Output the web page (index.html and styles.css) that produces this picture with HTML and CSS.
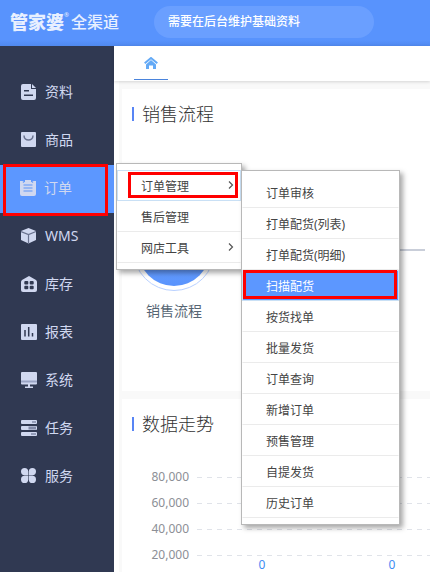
FILE: index.html
```html
<!DOCTYPE html>
<html lang="zh-CN">
<head>
<meta charset="utf-8">
<meta name="viewport" content="width=device-width, initial-scale=1">
<title>管家婆全渠道</title>
<link rel="stylesheet" href="styles.css">
</head>
<body>
<header class="topbar">
  <a class="logo" href="#"><b class="logo-main">管家婆</b><sup class="logo-mark">®</sup><span class="logo-sub">全渠道</span></a>
  <p class="notice">需要在后台维护基础资料</p>
</header>
<div class="shell">
  <nav class="sidebar">
    <a class="nav-item" href="#"><svg class="icon" viewBox="0 0 16 16"><path fill="currentColor" d="M2 0h8v5h5v9q0 2-2 2H2q-2 0-2-2V2q0-2 2-2zM11 0l4 4h-4z"/><path stroke="#303952" stroke-width="1.5" d="M3 6.700h5M3 11.200h9"/></svg>资料</a>
    <a class="nav-item" href="#"><svg class="icon" viewBox="0 0 16 16"><rect width="15" height="15" rx="1" fill="currentColor"/><path fill="none" stroke="#69728f" stroke-width="1.500" d="M3 3.500c0 6 9 6 9 0"/></svg>商品</a>
    <div class="nav-group">
      <a class="nav-item active" href="#"><svg class="icon" viewBox="0 0 16 16"><path fill="currentColor" d="M0 1h3v1h2V0h6v2h2V1h3v13q0 2-2 2H2q-2 0-2-2z"/><path stroke="#83abf3" stroke-width="1.300" d="M3.500 5h9M3.500 8h9M3.500 11h9M3.500 1v2M12.500 1v2"/></svg>订单</a>
      <span class="mark mark-nav"></span>
      <div class="menu menu-main">
        <a class="menu-item hover" href="#">订单管理<svg class="arrow" viewBox="0 0 6 8"><path d="M1 .500l3.500 3.500L1 7.500"/></svg></a>
        <a class="menu-item" href="#">售后管理</a>
        <a class="menu-item" href="#">网店工具<svg class="arrow" viewBox="0 0 6 8"><path d="M1 .500l3.500 3.500L1 7.500"/></svg></a>
        <span class="mark mark-parent"></span>
        <div class="menu menu-sub">
          <a class="menu-item" href="#">订单审核</a>
          <a class="menu-item" href="#">打单配货(列表)</a>
          <a class="menu-item" href="#">打单配货(明细)</a>
          <a class="menu-item selected" href="#">扫描配货<span class="mark mark-child"></span></a>
          <a class="menu-item" href="#">按货找单</a>
          <a class="menu-item" href="#">批量发货</a>
          <a class="menu-item" href="#">订单查询</a>
          <a class="menu-item" href="#">新增订单</a>
          <a class="menu-item" href="#">预售管理</a>
          <a class="menu-item" href="#">自提发货</a>
          <a class="menu-item" href="#">历史订单</a>
        </div>
      </div>
    </div>
    <a class="nav-item" href="#"><svg class="icon" viewBox="0 0 16 16"><path fill="currentColor" d="M7.500 0L15 3v9l-7.500 3.500L0 12V3z"/><path fill="none" stroke="#69728f" stroke-width="1.200" d="M0 3.500l7.500 3 7.500-3M7.500 6.500v9"/></svg>WMS</a>
    <a class="nav-item" href="#"><svg class="icon" viewBox="0 0 16 16"><path fill="currentColor" d="M8 0l7 4q1 1 1 2v8q0 2-2 2H2q-2 0-2-2V6q0-1 1-2z"/><g fill="#303952"><rect x="3.300" y="5" width="4" height="3.600" rx="1"/><rect x="8.700" y="5" width="4" height="3.600" rx="1"/><rect x="3.300" y="9.700" width="4" height="3.600" rx="1"/><rect x="8.700" y="9.700" width="4" height="3.600" rx="1"/></g></svg>库存</a>
    <a class="nav-item" href="#"><svg class="icon" viewBox="0 0 16 16"><rect width="16" height="16" rx="1" fill="currentColor"/><path stroke="#303952" stroke-width="1.500" d="M4 6v6.500M7.700 3v9.500M11.500 9v3.500"/></svg>报表</a>
    <a class="nav-item" href="#"><svg class="icon" viewBox="0 0 16 16"><rect width="16" height="12.500" rx="1" fill="currentColor"/><path fill="#9aa4c4" d="M0 8.500h16v2H0z"/><path fill="currentColor" d="M7 12h2v2.500h3V16H4v-1.500h3z"/></svg>系统</a>
    <a class="nav-item" href="#"><svg class="icon" viewBox="0 0 16 16"><g fill="currentColor"><rect width="16" height="4" rx="1"/><rect y="6" width="16" height="4" rx="1"/><rect y="12" width="16" height="4" rx="1"/></g><path fill="#818aa8" d="M11 1.200h4v1.600h-4zM7.500 6.500H15v3H7.500zM10 13.200h5v1.600h-5z"/></svg>任务</a>
    <a class="nav-item" href="#"><svg class="icon" viewBox="0 0 16 16"><g fill="currentColor"><path d="M3.600 0a3.600 3.600 0 0 1 3.600 3.600v3.600H3.600a3.600 3.600 0 0 1 0-7.200zM11.400 0a3.600 3.600 0 0 1 0 7.200H7.800V3.600A3.600 3.600 0 0 1 11.400 0zM3.600 7.800h3.600v3.600a3.600 3.600 0 1 1-3.600-3.600zM7.800 7.800h3.600a3.600 3.600 0 1 1-3.600 3.600z"/></g></svg>服务</a>
  </nav>
  <main class="content">
    <div class="tabs">
      <a class="tab" href="#" aria-label="首页"><svg class="home" viewBox="0 0 14 12"><path fill="none" stroke="#64aaf6" stroke-width="2" d="M.700 6.300L7 1l6.300 5.300"/><path fill="#64aaf6" d="M7 3l5 4.400V12H9V8.500H5V12H2V7.400z"/></svg></a>
    </div>
    <div class="board">
      <section class="card">
        <h2 class="title">销售流程</h2>
        <div class="flow">
          <div class="step"><span class="disc"></span><span class="step-name">销售流程</span></div>
          <span class="link"></span>
        </div>
      </section>
      <section class="card card-chart">
        <h2 class="title">数据走势</h2>
        <div class="chart">
          <div class="row"><span class="tick">80,000</span><span class="grid"></span></div>
          <div class="row"><span class="tick">60,000</span><span class="grid"></span></div>
          <div class="row"><span class="tick">40,000</span><span class="grid"></span></div>
          <div class="row"><span class="tick">20,000</span><span class="grid"></span></div>
          <div class="values"><span>0</span><span>0</span></div>
        </div>
      </section>
    </div>
  </main>
</div>
</body>
</html>
```
FILE: styles.css
```css
* { box-sizing: border-box; }

body {
  margin: 0;
  height: 100vh;
  display: flex;
  flex-direction: column;
  overflow: hidden;
  background: #fff;
  color: #333;
  font: 12px/20px "Noto Sans", "Noto Sans CJK SC", sans-serif;
}

a { color: inherit; text-decoration: none; }

/* top bar */
.topbar {
  flex: none;
  height: 46px;
  display: flex;
  align-items: flex-start;
  padding: 6px 0 0 10px;
  color: #fff;
  background: linear-gradient(#5893fd 0 40px, #5089ef);
}
.logo { display: flex; align-items: center; width: 144px; height: 32px; white-space: nowrap; color: #e8f0ff; }
.logo-main { font-size: 18px; font-weight: 900; }
.logo-mark { width: 7px; font-size: 6px; line-height: 6px; align-self: flex-start; padding-top: 6px; }
.logo-sub { font-size: 16px; font-weight: 500; }
.notice {
  width: 220px;
  margin: 0;
  padding: 0 14px;
  line-height: 32px;
  font-weight: 500;
  border-radius: 16px;
  background: #6a9fff;
}

.shell { flex: 1; min-height: 0; display: flex; }

/* side navigation */
.sidebar {
  flex: none;
  width: 114px;
  padding-top: 23px;
  color: #d0d8f0;
  background: #303952;
}
.nav-item {
  display: flex;
  align-items: center;
  gap: 8px;
  height: 48px;
  padding: 0 0 2px 21px;
  font-size: 14px;
}
.nav-item.active { padding-left: 20px; background: #5c97ff; }
.icon { width: 16px; height: 16px; }
.nav-group { position: relative; }

/* pop-up menus */
.menu {
  position: absolute;
  z-index: 2;
  padding: 6px 0;
  border: 1px solid #b8b8b8;
  background: #fff;
  color: #444;
  box-shadow: 3px 3px 5px rgba(0, 0, 0, .35);
}
.menu-main { left: 116px; top: -2px; width: 126px; }
.menu-sub { left: 124px; top: 6px; width: 159px; }
.menu-item {
  position: relative;
  display: flex;
  align-items: center;
  justify-content: space-between;
  height: 31px;
  padding: 2px 6px 0 23px;
  border: 1px solid transparent;
  border-bottom-color: #ebebeb;
}
.menu-item.hover { border-color: #c9e0f5; }
.menu-item.selected { color: #fff; background: #5c97ff; border-color: #c9e0f5; }
.arrow { width: 6px; height: 8px; margin-bottom: 4px; fill: none; stroke: #555; stroke-width: 1.200; }

/* highlight frames */
.mark { position: absolute; z-index: 3; border: 3px solid #f00; }
.mark-nav { left: 3px; top: -1px; width: 105px; height: 52px; }
.mark-parent { left: 11px; top: 8px; width: 110px; height: 26px; }
.mark-child { left: 0; right: 1px; top: -1px; height: 29px; }

/* content */
.content { flex: 1; min-width: 0; display: flex; flex-direction: column; }
.tabs {
  position: relative;
  flex: none;
  height: 35px;
  padding-left: 20px;
  display: flex;
  box-shadow: 0 1px 3px rgba(0, 0, 0, .15);
}
.tab {
  width: 34px;
  height: 34px;
  display: flex;
  align-items: center;
  justify-content: center;
  border-bottom: 1px solid #4a84dc;
}
.home { width: 14px; height: 12px; }
.board {
  flex: 1;
  min-height: 0;
  display: flex;
  flex-direction: column;
  gap: 8px;
  margin-left: 5px;
  padding: 8px 0 0 3px;
  background: #f9f9f9;
}
.card { flex: none; height: 302px; padding: 12px 0 0 10px; background: #fff; }
.card-chart { flex: 1; min-height: 0; }
.title {
  display: flex;
  align-items: center;
  gap: 8px;
  margin: 0;
  font-size: 18px;
  line-height: 26px;
  font-weight: 300;
}
.title::before { content: ""; width: 2px; height: 14px; background: #5885f5; }
.flow { display: flex; padding: 82px 0 0 1px; }
.step { flex: none; width: 82px; display: flex; flex-direction: column; align-items: center; gap: 10px; }
.disc {
  width: 82px;
  height: 82px;
  display: grid;
  place-items: center;
  border: 1px solid #b9d1ff;
  border-radius: 50%;
}
.disc::before {
  content: "";
  width: 72px;
  height: 72px;
  border-radius: 50%;
  background: linear-gradient(#8ab3ff, #5893fd);
}
.step-name { font-size: 14px; color: #566573; }
.link { flex: 1; height: 2px; margin: 40px 5px 0 4px; background: #c9ced9; }

/* trend chart */
.chart { padding-top: 27px; }
.row { display: flex; align-items: center; gap: 8px; height: 26px; }
.tick { width: 57px; text-align: right; color: #8c8f96; }
.grid {
  flex: 1;
  height: 1px;
  background: repeating-linear-gradient(90deg, #e0e3e9 0 5px, transparent 5px 10px);
}
.values { display: flex; margin-top: -11px; padding-left: 65px; overflow: hidden; line-height: 16px; color: #3f8cf4; }
.values span { width: 130px; flex: none; text-align: center; }
```
